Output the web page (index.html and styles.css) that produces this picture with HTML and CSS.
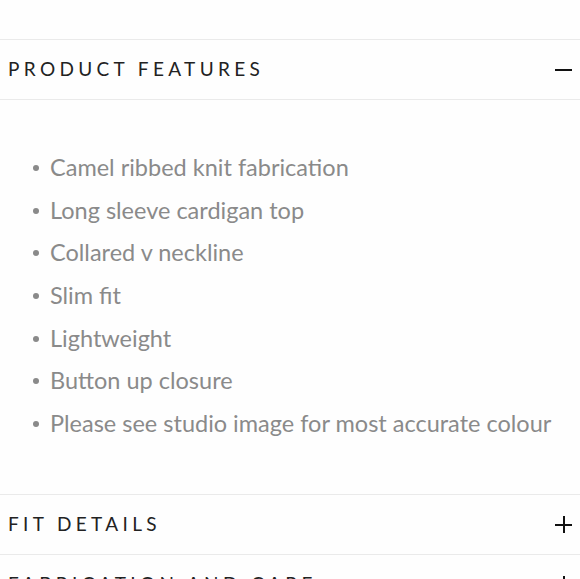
FILE: index.html
```html
<!DOCTYPE html>
<html lang="en">
<head>
<meta charset="utf-8">
<title>Product features</title>
<link rel="stylesheet" href="styles.css">
</head>
<body>
<div class="top-space"></div>
<section class="accordion">
  <div class="acc-item open">
    <div class="acc-head">
      <span class="acc-title">PRODUCT FEATURES</span>
      <span class="acc-icon minus"></span>
    </div>
    <div class="acc-body">
      <ul class="features">
        <li>Camel ribbed knit fabrication</li>
        <li>Long sleeve cardigan top</li>
        <li>Collared v neckline</li>
        <li>Slim fit</li>
        <li>Lightweight</li>
        <li>Button up closure</li>
        <li>Please see studio image for most accurate colour</li>
      </ul>
    </div>
  </div>
  <div class="acc-item">
    <div class="acc-head">
      <span class="acc-title">FIT DETAILS</span>
      <span class="acc-icon plus"></span>
    </div>
  </div>
  <div class="acc-item">
    <div class="acc-head">
      <span class="acc-title">FABRICATION AND CARE</span>
      <span class="acc-icon plus"></span>
    </div>
  </div>
</section>
</body>
</html>
```

FILE: styles.css
```css
html, body {
  margin: 0;
  padding: 0;
  background: #fefefe;
  overflow: hidden;
}
body {
  font-family: "Lato", "Liberation Sans", sans-serif;
}
.top-space {
  height: 39px;
}
.acc-item {
  border-top: 1px solid #eaeaea;
}
.acc-head {
  height: 59px;
  display: flex;
  align-items: center;
  justify-content: space-between;
  padding: 0 8px 0 8px;
}
.acc-title {
  font-size: 19px;
  letter-spacing: 4.35px;
  color: #222;
  font-weight: 400;
  position: relative;
  top: -1px;
}
.acc-icon {
  position: relative;
  width: 17px;
  height: 17px;
}
.acc-icon::before,
.acc-icon::after {
  content: "";
  position: absolute;
  background: #111;
}
.acc-icon::before {
  left: 0;
  right: 0;
  top: 8px;
  height: 2px;
}
.plus::after {
  top: 0;
  bottom: 0;
  left: 8px;
  width: 2px;
}
.acc-body {
  border-top: 1px solid #eaeaea;
  padding: 46px 0 49px;
}
.features {
  margin: 0;
  padding: 0 0 0 50px;
  list-style: none;
}
.features li {
  position: relative;
  font-size: 23.5px;
  line-height: 42.67px;
  color: #8a8a8a;
}
.features li::before {
  content: "";
  position: absolute;
  left: -17px;
  top: 19px;
  width: 6px;
  height: 6px;
  border-radius: 50%;
  background: #8a8a8a;
}
```
